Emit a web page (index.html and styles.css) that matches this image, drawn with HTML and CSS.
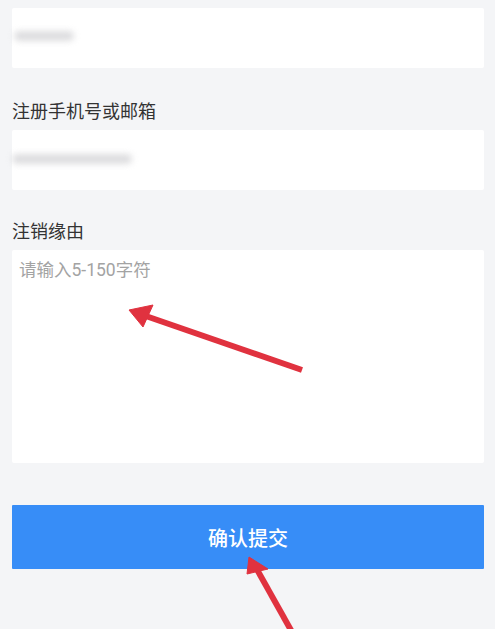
FILE: index.html
```html
<!DOCTYPE html>
<html lang="zh">
<head>
<meta charset="utf-8">
<link rel="stylesheet" href="styles.css">
</head>
<body>
<div class="page">
  <div class="field field-short"><span class="blur blur-a"></span></div>
  <div class="label">注册手机号或邮箱</div>
  <div class="field field-short"><span class="blur blur-b"></span></div>
  <div class="label label-2">注销缘由</div>
  <div class="field field-area"><span class="placeholder">请输入5-150字符</span></div>
  <button class="submit">确认提交</button>
  <svg class="arrows" width="495" height="629" viewBox="0 0 495 629">
    <g fill="#e0323f" stroke="#e0323f" stroke-linejoin="round">
      <line x1="302" y1="370" x2="140" y2="314" stroke-width="6"/>
      <polygon points="129,310 153,305 143,327" stroke-width="1"/>
      <line x1="292" y1="632" x2="255" y2="566" stroke-width="6"/>
      <polygon points="249,557 268,569 247,574" stroke-width="1"/>
    </g>
  </svg>
</div>
</body>
</html>
```
FILE: styles.css
```css
html, body {
  margin: 0;
  padding: 0;
  background: #f4f5f7;
}
body {
  font-family: "Noto Sans CJK SC", "Noto Sans", sans-serif;
  color: #333;
}
.page {
  position: relative;
  width: 495px;
  height: 629px;
  overflow: hidden;
  padding: 8px 11px 0 12px;
  box-sizing: border-box;
  display: flex;
  flex-direction: column;
}
.field {
  background: #ffffff;
  border-radius: 2px;
  position: relative;
}
.field-short {
  height: 60px;
  display: flex;
  align-items: center;
}
.blur {
  display: block;
  height: 10px;
  background: #cfcfd2;
  border-radius: 5px;
  filter: blur(3px);
  opacity: 0.7;
}
.blur-a {
  width: 60px;
  margin: -4px 0 0 2px;
}
.blur-b {
  width: 120px;
  margin: -2px 0 0 0;
}
.label {
  margin: 30px 0 8px;
  font-size: 18px;
  line-height: 24px;
  color: #333;
}
.label-2 {
  margin-top: 28px;
}
.field-area {
  height: 213px;
  padding: 7px 7px;
  box-sizing: border-box;
}
.placeholder {
  font-family: "Roboto", "Noto Sans CJK SC", sans-serif;
  font-size: 17.5px;
  line-height: 26px;
  color: #a3a3a3;
}
.submit {
  margin-top: 42px;
  height: 64px;
  border: none;
  border-radius: 1px;
  background: #378df7;
  color: #fff;
  font-family: "Noto Sans CJK SC", sans-serif;
  font-size: 20px;
  font-weight: 500;
  padding: 0;
}
.arrows {
  position: absolute;
  left: 0;
  top: 0;
  pointer-events: none;
}
```
